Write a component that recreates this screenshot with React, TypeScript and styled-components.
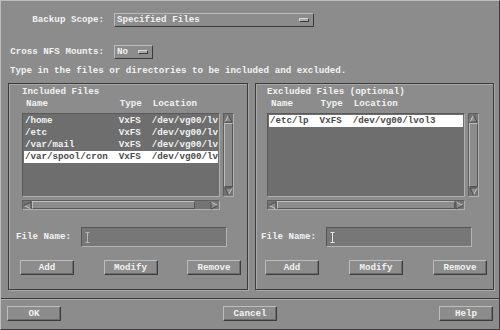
import styled, { createGlobalStyle } from "styled-components";

const BG = "#8c8c8c";
const LIGHT = "#bdbdbd";
const DARK = "#3c3c3c";
const TEXT = "#f2f2f2";

const GlobalStyle = createGlobalStyle`
  html, body {
    margin: 0;
    padding: 0;
    background: ${BG};
  }
`;

const Dialog = styled.div`
  width: 500px;
  height: 330px;
  box-sizing: border-box;
  background: ${BG};
  border-top: 1px solid ${LIGHT};
  border-left: 1px solid ${LIGHT};
  border-right: 1px solid ${DARK};
  border-bottom: 1px solid ${DARK};
  display: flex;
  flex-direction: column;
  font: bold 9.2px/12px "Liberation Mono", "DejaVu Sans Mono", monospace;
  color: ${TEXT};
  white-space: pre;
  overflow: hidden;
`;

const Form = styled.div`
  padding: 12px 0 0 9px;
  display: flex;
  flex-direction: column;
`;

const FieldRow = styled.div<{ $gap?: number }>`
  display: grid;
  grid-template-columns: 94px auto;
  column-gap: 10px;
  align-items: center;
  height: 14px;
  margin-bottom: ${(p) => p.$gap ?? 0}px;
`;

const Label = styled.span`
  text-align: right;
`;

const OptionMenu = styled.div<{ $width: number }>`
  width: ${(p) => p.$width}px;
  height: 14px;
  box-sizing: border-box;
  border-top: 1px solid ${LIGHT};
  border-left: 1px solid ${LIGHT};
  border-right: 1px solid ${DARK};
  border-bottom: 1px solid ${DARK};
  display: flex;
  align-items: center;
  justify-content: space-between;
  padding: 0 4px 0 2px;
`;

const Indicator = styled.span`
  width: 10px;
  height: 4px;
  box-sizing: border-box;
  background: #a9a9a9;
  border-top: 1px solid #d8d8d8;
  border-left: 1px solid #d8d8d8;
  border-right: 1px solid ${DARK};
  border-bottom: 1px solid ${DARK};
`;

const Hint = styled.div`
  margin-top: 6px;
  height: 12px;
`;

const Panels = styled.div`
  display: flex;
  gap: 7px;
  margin-top: 6px;
  padding-left: 7px;
`;

const Frame = styled.div<{ $width: number; $inset: number }>`
  width: ${(p) => p.$width}px;
  height: 207px;
  box-sizing: border-box;
  border: 1px solid ${DARK};
  box-shadow: inset 1px 1px 0 #a8a8a8, 1px 1px 0 #a8a8a8;
  padding: 0 6px 0 ${(p) => p.$inset}px;
  display: flex;
  flex-direction: column;
`;

const Title = styled.div`
  margin-top: 2px;
  height: 12px;
`;

const Header = styled.div`
  height: 11px;
  line-height: 11px;
  padding-left: 4px;
`;

const ListRow = styled.div`
  margin-top: 4px;
  display: flex;
  gap: 3px;
  height: 84px;
`;

const ListBox = styled.div`
  width: 198px;
  box-sizing: border-box;
  background: #6e6e6e;
  border-top: 1px solid #5a5a5a;
  border-left: 1px solid #5a5a5a;
  border-right: 1px solid #b0b0b0;
  border-bottom: 1px solid #b0b0b0;
  padding-top: 1px;
  overflow: hidden;
`;

const Item = styled.div<{ $selected?: boolean }>`
  height: 12px;
  line-height: 12px;
  margin: 0 1px;
  padding-left: 1px;
  overflow: hidden;
  background: ${(p) => (p.$selected ? "#ffffff" : "transparent")};
  color: ${(p) => (p.$selected ? "#4a4a4a" : TEXT)};
`;

const Trough = styled.div<{ $vertical?: boolean }>`
  box-sizing: border-box;
  background: #747474;
  border-top: 1px solid #5e5e5e;
  border-left: 1px solid #5e5e5e;
  border-right: 1px solid #b0b0b0;
  border-bottom: 1px solid #b0b0b0;
  display: flex;
  flex-direction: ${(p) => (p.$vertical ? "column" : "row")};
  width: ${(p) => (p.$vertical ? "11px" : "198px")};
  height: ${(p) => (p.$vertical ? "84px" : "10px")};
  margin-top: ${(p) => (p.$vertical ? 0 : 3)}px;
`;

const Thumb = styled.div<{ $grow?: boolean }>`
  flex: ${(p) => (p.$grow ? "1 1 auto" : "0 0 auto")};
  box-sizing: border-box;
  background: ${BG};
  border-top: 1px solid ${LIGHT};
  border-left: 1px solid ${LIGHT};
  border-right: 1px solid #555;
  border-bottom: 1px solid #555;
`;

const Gap = styled.div`
  flex: 1 1 auto;
`;

const FileRow = styled.div`
  margin-top: 17px;
  margin-left: -6px;
  display: flex;
  align-items: center;
  height: 20px;
`;

const FileLabel = styled.span`
  width: 65px;
`;

const TextField = styled.div`
  width: 146px;
  height: 20px;
  box-sizing: border-box;
  background: #777777;
  border-top: 1px solid #555;
  border-left: 1px solid #555;
  border-right: 1px solid #b3b3b3;
  border-bottom: 1px solid #b3b3b3;
  display: flex;
  align-items: center;
  padding-left: 3px;
`;

const ButtonRow = styled.div`
  display: flex;
  justify-content: space-between;
  margin-top: 13px;
  margin-left: -2px;
`;

const Button = styled.div`
  width: 54px;
  height: 15px;
  box-sizing: border-box;
  background: ${BG};
  border-top: 1px solid ${LIGHT};
  border-left: 1px solid ${LIGHT};
  border-right: 1px solid ${DARK};
  border-bottom: 1px solid ${DARK};
  box-shadow: inset -1px -1px 0 #6c6c6c;
  display: flex;
  align-items: center;
  justify-content: center;
  line-height: 12px;
`;

const Separator = styled.div`
  margin-top: 8px;
  height: 1px;
  background: ${DARK};
  border-bottom: 1px solid #a8a8a8;
`;

const BottomBar = styled.div`
  margin-top: 6px;
  padding: 0 6px;
  display: flex;
  justify-content: space-between;
`;

function Arrow({ dir }: { dir: "up" | "down" | "left" | "right" }) {
  const rot = { up: 0, right: 90, down: 180, left: 270 }[dir];
  return (
    <svg width="9" height="9" viewBox="0 0 9 9" style={{ flex: "0 0 auto" }}>
      <g transform={`rotate(${rot} 4.5 4.5)`}>
        <polygon points="4.5,1 1,8 8,8" fill={BG} />
        <polyline points="1,8 4.5,1" stroke="#c8c8c8" fill="none" strokeWidth="1" />
        <polyline points="4.5,1 8,8 1,8" stroke="#4a4a4a" fill="none" strokeWidth="1" />
      </g>
    </svg>
  );
}

function IBeam({ strong }: { strong?: boolean }) {
  const c = strong ? "#e8e8e8" : "#b8b8b8";
  return (
    <svg width="5" height="11" viewBox="0 0 5 11">
      <line x1="2.5" y1="0.5" x2="2.5" y2="10.5" stroke={c} strokeWidth="1" />
      <line x1="0.5" y1="0.5" x2="4.5" y2="0.5" stroke={c} strokeWidth="1" />
      <line x1="0.5" y1="10.5" x2="4.5" y2="10.5" stroke={c} strokeWidth="1" />
    </svg>
  );
}

interface Entry {
  name: string;
  loc: string;
  selected?: boolean;
}

function FilePanel({
  title,
  nameWidth,
  entries,
  width,
  inset,
  thumb,
  focused,
}: {
  title: string;
  nameWidth: number;
  entries: Entry[];
  width: number;
  inset: number;
  thumb?: number;
  focused?: boolean;
}) {
  return (
    <Frame $width={width} $inset={inset}>
      <Title>{title}</Title>
      <Header>{"Name".padEnd(nameWidth) + "Type  Location"}</Header>
      <ListRow>
        <ListBox>
          {entries.map((e) => (
            <Item key={e.name} $selected={e.selected}>
              {e.name.padEnd(nameWidth) + "VxFS  " + e.loc}
            </Item>
          ))}
        </ListBox>
        <Trough $vertical>
          <Arrow dir="up" />
          <Thumb $grow />
          <Arrow dir="down" />
        </Trough>
      </ListRow>
      <Trough>
        <Arrow dir="left" />
        {thumb ? <Thumb style={{ width: thumb }} /> : <Thumb $grow />}
        {thumb ? <Gap /> : null}
        <Arrow dir="right" />
      </Trough>
      <FileRow>
        <FileLabel>File Name:</FileLabel>
        <TextField>
          <IBeam strong={focused} />
        </TextField>
      </FileRow>
      <ButtonRow>
        <Button>Add</Button>
        <Button>Modify</Button>
        <Button>Remove</Button>
      </ButtonRow>
    </Frame>
  );
}

export default function App() {
  return (
    <>
      <GlobalStyle />
      <Dialog>
        <Form>
          <FieldRow $gap={18}>
            <Label>Backup Scope:</Label>
            <OptionMenu $width={200}>
              <span>Specified Files</span>
              <Indicator />
            </OptionMenu>
          </FieldRow>
          <FieldRow>
            <Label>Cross NFS Mounts:</Label>
            <OptionMenu $width={39}>
              <span>No</span>
              <Indicator />
            </OptionMenu>
          </FieldRow>
          <Hint>Type in the files or directories to be included and excluded.</Hint>
        </Form>
        <Panels>
          <FilePanel
            title="Included Files"
            nameWidth={17}
            width={240}
            inset={13}
            thumb={163}
            entries={[
              { name: "/home", loc: "/dev/vg00/lvol4" },
              { name: "/etc", loc: "/dev/vg00/lvol3" },
              { name: "/var/mail", loc: "/dev/vg00/lvol7" },
              { name: "/var/spool/cron", loc: "/dev/vg00/lvol7", selected: true },
            ]}
          />
          <FilePanel
            title="Excluded Files (optional)"
            nameWidth={9}
            width={239}
            inset={11}
            focused
            entries={[{ name: "/etc/lp", loc: "/dev/vg00/lvol3", selected: true }]}
          />
        </Panels>
        <Separator />
        <BottomBar>
          <Button>OK</Button>
          <Button>Cancel</Button>
          <Button>Help</Button>
        </BottomBar>
      </Dialog>
    </>
  );
}
